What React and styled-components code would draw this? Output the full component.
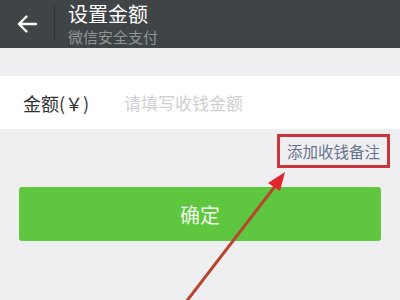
import React from "react";
import styled, { createGlobalStyle } from "styled-components";

const Global = createGlobalStyle`
  html, body { margin: 0; padding: 0; background: #efeff2; }
  body { font-family: "Noto Sans CJK SC", "Noto Sans", sans-serif; }
  * { box-sizing: border-box; }
`;

const Page = styled.div`
  position: relative;
  width: 400px;
  height: 300px;
  overflow: hidden;
  background: #efeff2;
`;

const Header = styled.div`
  height: 48px;
  background: #3f4446;
  display: flex;
  align-items: stretch;
`;

const Back = styled.div`
  width: 54px;
  display: flex;
  align-items: center;
  justify-content: center;
`;

const Divider = styled.div`
  width: 1px;
  height: 34px;
  margin-top: 5px;
  background: #2f3334;
`;

const Titles = styled.div`
  display: flex;
  flex-direction: column;
  padding: 3px 0 0 13px;
`;

const Title = styled.div`
  color: #ffffff;
  font-size: 20px;
  line-height: 22px;
`;

const Subtitle = styled.div`
  color: #8f9495;
  font-size: 15px;
  line-height: 18px;
  margin-top: 3px;
`;

const InputRow = styled.div`
  margin-top: 28px;
  height: 53px;
  background: #ffffff;
  display: flex;
  align-items: center;
  padding-left: 23px;
`;

const Label = styled.div`
  width: 101px;
  color: #333333;
  font-size: 18px;
`;

const Placeholder = styled.div`
  color: #cfcfd2;
  font-size: 17px;
`;

const LinkRow = styled.div`
  display: flex;
  justify-content: flex-end;
  padding-right: 10px;
  margin-top: 5px;
`;

const LinkBox = styled.div`
  width: 113px;
  height: 34px;
  border: 3px solid #c9353a;
  display: flex;
  align-items: center;
  justify-content: center;
  color: #66738e;
  font-size: 15.5px;
`;

const Button = styled.div`
  margin: 19px 19px 0;
  height: 54px;
  border-radius: 3px;
  background: #5fc63f;
  color: #eef9e8;
  font-size: 20px;
  display: flex;
  align-items: center;
  justify-content: center;
`;

const Overlay = styled.svg`
  position: absolute;
  left: 0;
  top: 0;
  pointer-events: none;
`;

export default function App() {
  return (
    <Page>
      <Global />
      <Header>
        <Back>
          <svg width="20" height="18" viewBox="0 0 20 18">
            <path d="M19 9H2M9.5 1.5L2 9l7.5 7.5" fill="none" stroke="#fff" strokeWidth="2.4" strokeLinecap="round" strokeLinejoin="round" />
          </svg>
        </Back>
        <Divider />
        <Titles>
          <Title>设置金额</Title>
          <Subtitle>微信安全支付</Subtitle>
        </Titles>
      </Header>
      <InputRow>
        <Label>金额(￥)</Label>
        <Placeholder>请填写收钱金额</Placeholder>
      </InputRow>
      <LinkRow>
        <LinkBox>添加收钱备注</LinkBox>
      </LinkRow>
      <Button>确定</Button>
      <Overlay width="400" height="300" viewBox="0 0 400 300">
        <line x1="186" y1="302" x2="276" y2="185" stroke="#b8452e" strokeWidth="3" />
        <polygon points="285,172 268,183 280,191" fill="#e2262b" />
      </Overlay>
    </Page>
  );
}
